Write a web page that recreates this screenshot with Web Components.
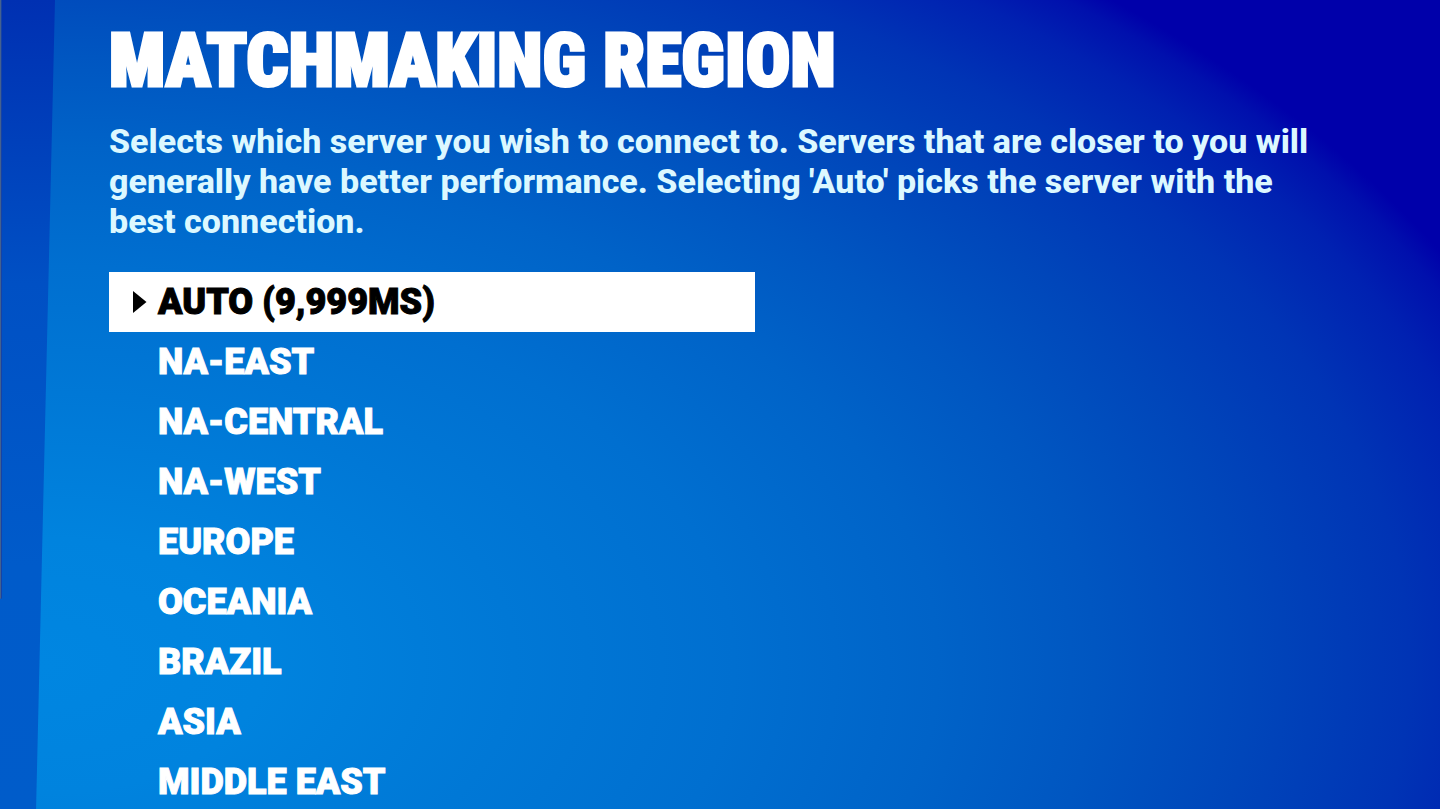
<!DOCTYPE html>
<html lang="en">
<head>
<meta charset="utf-8">
<meta name="viewport" content="width=device-width, initial-scale=1">
<title>Matchmaking Region</title>
<style>
  body { margin: 0; font-family: Roboto, "Liberation Sans", sans-serif; color: #fff; background: #005bc8; }
</style>
</head>
<body>
<settings-screen>
  <setting-header slot="header">
    <span slot="title">Matchmaking Region</span>
    Selects which server you wish to connect to. Servers that are closer to you will generally have better performance. Selecting 'Auto' picks the server with the best connection.
  </setting-header>
  <region-list>
    <region-option selected>Auto (9,999ms)</region-option>
    <region-option>NA-East</region-option>
    <region-option>NA-Central</region-option>
    <region-option>NA-West</region-option>
    <region-option>Europe</region-option>
    <region-option>Oceania</region-option>
    <region-option>Brazil</region-option>
    <region-option>Asia</region-option>
    <region-option>Middle East</region-option>
  </region-list>
</settings-screen>

<script>
function define(name, html, setup) {
  customElements.define(name, class extends HTMLElement {
    constructor() {
      super();
      this.attachShadow({ mode: 'open' }).innerHTML = html;
      if (setup) setup(this);
    }
  });
}

define('settings-screen', `
  <style>
    :host {
      display: block;
      height: 100vh;
      overflow: hidden;
      /* thin edge of the neighbouring panel, then the dark side strip */
      background:
        linear-gradient(90deg, #45618f 1px, #1743a4 1px) 0 0 / 2px 74% no-repeat,
        linear-gradient(#0030b2, #0050c4 35%, #005bca 70%, #005cca);
    }
    main {
      box-sizing: border-box;
      min-height: 100%;
      padding: 24px 100px 0 109px;
      clip-path: polygon(55px 0, 100% 0, 100% 100%, 36px 100%);
      background: radial-gradient(109% 112% at 3% 82%,
        #0086e1 0%, #0083de 14%, #0078d6 30%, #006fd0 44%, #0063c8 57%,
        #0056c1 67%, #0046ba 77%, #0034b5 87%, #0021b1 94%, #0010ad 98%, #0000aa 100%);
    }
  </style>
  <main><slot name="header"></slot><slot></slot></main>`);

define('setting-header', `
  <style>
    :host { display: block; }
    h1 {
      margin: 0 0 24px;
      font: 900 74px/73px "Roboto Condensed", Roboto, sans-serif;
      text-transform: uppercase;
      -webkit-text-stroke: 3px #fff;
    }
    p {
      margin: 0 0 31px;
      font-size: 34px;
      line-height: 40px;
      font-weight: 800;
      color: #dcf8ff;
    }
  </style>
  <h1><slot name="title"></slot></h1>
  <p><slot></slot></p>`);

define('region-list', `
  <style>
    :host { display: flex; flex-direction: column; max-width: 646px; }
  </style>
  <slot></slot>`,
  host => host.addEventListener('click', e => {
    const picked = e.target.closest('region-option');
    if (!picked) return;
    for (const option of host.children) option.toggleAttribute('selected', option === picked);
  }));

define('region-option', `
  <style>
    :host { display: block; }
    button {
      display: flex;
      align-items: center;
      gap: 11px;
      width: 100%;
      height: 60px;
      padding: 0 24px;
      border: 0;
      background: none;
      color: inherit;
      font: inherit;
      font-size: 36px;
      font-weight: 900;
      text-align: left;
      text-transform: uppercase;
      -webkit-text-stroke: 1px currentColor;
      cursor: pointer;
    }
    svg { flex: none; visibility: hidden; }
    :host([selected]) button { background: #fff; color: #000; }
    :host([selected]) svg { visibility: visible; }
  </style>
  <button type="button">
    <svg width="14" height="24" viewBox="0 0 14 24" aria-hidden="true"><path d="M0 1 13.500 12 0 23Z" fill="currentColor"/></svg>
    <span><slot></slot></span>
  </button>`);
</script>
</body>
</html>
